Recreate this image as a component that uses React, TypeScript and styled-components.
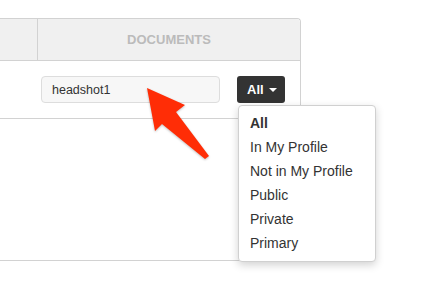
import styled, { createGlobalStyle } from "styled-components";

const menuItems = ["All", "In My Profile", "Not in My Profile", "Public", "Private", "Primary"];

const GlobalStyle = createGlobalStyle`
  html, body {
    margin: 0;
    padding: 0;
    background: #ffffff;
    font-family: "Liberation Sans", Arial, sans-serif;
  }
`;

export default function App() {
  return (
    <Page>
      <GlobalStyle />
      <Panel>
        <HeaderRow>
          <HeaderCell />
          <HeaderCell>Documents</HeaderCell>
        </HeaderRow>
        <FilterRow>
          <SearchInput defaultValue="headshot1" />
          <DropdownWrap>
            <FilterButton>
              All
              <Caret />
            </FilterButton>
            <Menu>
              {menuItems.map((item, ind) => (
                <MenuItem key={ind} active={ind === 0}>
                  {item}
                </MenuItem>
              ))}
            </Menu>
          </DropdownWrap>
        </FilterRow>
        <EmptyArea />
      </Panel>
      <Arrow viewBox="0 0 70 80" width="70" height="80">
        <polygon
          points="2,3 40,20 31,27 64,71 60,74 17,39 10,46"
          fill="#ff2d06"
        />
      </Arrow>
    </Page>
  );
}

const Page = styled.div`
  position: relative;
  width: 423px;
  height: 291px;
  padding-top: 18px;
  box-sizing: border-box;
  overflow: hidden;
`;

const Panel = styled.div`
  width: 301px;
  border-top: 1px solid #d2d2d2;
  border-right: 1px solid #d2d2d2;
  border-top-right-radius: 4px;
  box-sizing: border-box;
`;

const HeaderRow = styled.div`
  display: grid;
  grid-template-columns: 38px 1fr;
  height: 41px;
  background: #f0f0f0;
  border-bottom: 1px solid #d2d2d2;
  border-top-right-radius: 4px;
`;

const HeaderCell = styled.div`
  display: flex;
  align-items: center;
  justify-content: center;
  font-size: 13px;
  font-weight: bold;
  color: #bbbbbb;
  text-transform: uppercase;

  &:first-child {
    border-right: 1px solid #d2d2d2;
  }
`;

const FilterRow = styled.div`
  display: flex;
  align-items: flex-start;
  height: 58px;
  padding: 15px 0 0 41px;
  box-sizing: border-box;
  border-bottom: 1px solid #d2d2d2;
`;

const SearchInput = styled.input`
  width: 179px;
  height: 27px;
  box-sizing: border-box;
  padding: 0 10px;
  border: 1px solid #dddddd;
  border-radius: 4px;
  background: #f7f7f7;
  font-family: "Liberation Sans", Arial, sans-serif;
  font-size: 12.5px;
  color: #333333;
  outline: none;
`;

const DropdownWrap = styled.div`
  position: relative;
  margin-left: 17px;
`;

const FilterButton = styled.button`
  display: flex;
  align-items: center;
  gap: 5px;
  width: 48px;
  height: 27px;
  padding: 0 0 0 10px;
  border: none;
  border-radius: 3px;
  background: #333333;
  color: #ffffff;
  font-family: "Liberation Sans", Arial, sans-serif;
  font-size: 13px;
  font-weight: bold;
`;

const Caret = styled.span`
  width: 0;
  height: 0;
  margin-top: 1px;
  border-left: 4px solid transparent;
  border-right: 4px solid transparent;
  border-top: 4px solid #ffffff;
`;

const Menu = styled.ul`
  position: absolute;
  top: 29px;
  left: 1px;
  width: 138px;
  margin: 0;
  padding: 5px 0 6px;
  box-sizing: border-box;
  list-style: none;
  background: #ffffff;
  border: 1px solid #d0d0d0;
  border-radius: 4px;
  box-shadow: 0 3px 8px rgba(0, 0, 0, 0.18);
  z-index: 2;
`;

const MenuItem = styled.li<{ active?: boolean }>`
  height: 24px;
  line-height: 24px;
  padding-left: 11px;
  font-size: 14px;
  color: #333333;
  font-weight: ${(props) => (props.active ? "bold" : "normal")};
  white-space: nowrap;
`;

const EmptyArea = styled.div`
  height: 141px;
  border-bottom: 1px solid #d2d2d2;
`;

const Arrow = styled.svg`
  position: absolute;
  left: 145px;
  top: 85px;
  filter: drop-shadow(0 1px 1px rgba(0, 0, 0, 0.25));
  z-index: 3;
`;
